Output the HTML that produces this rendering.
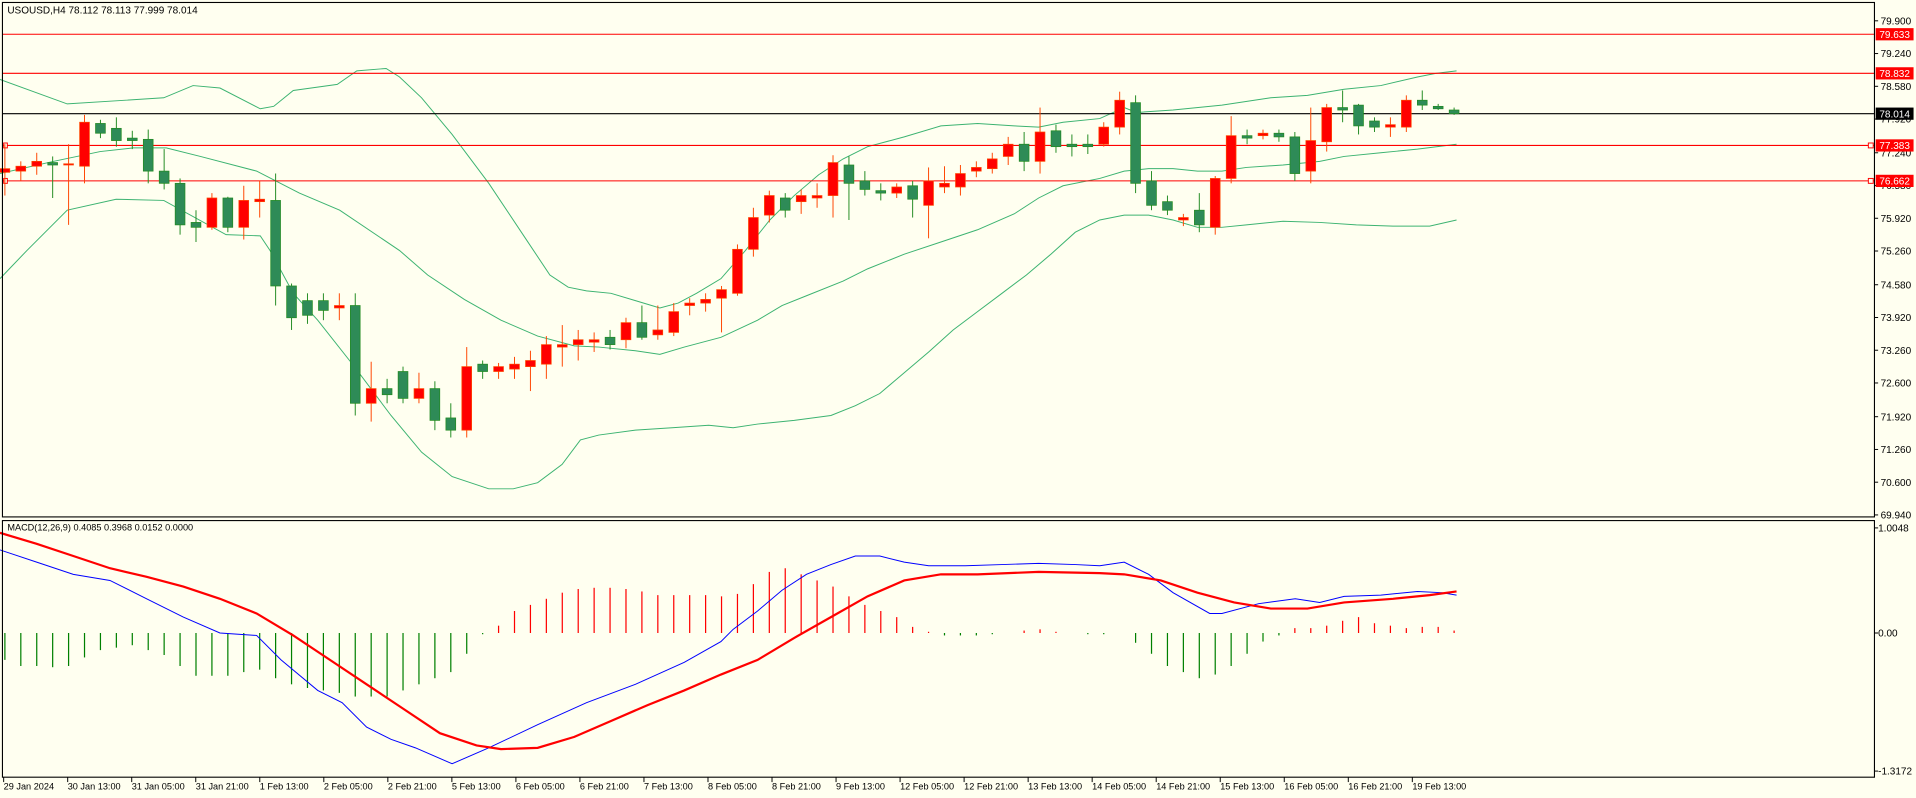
<!DOCTYPE html>
<html><head><meta charset="utf-8"><style>
html,body{margin:0;padding:0;background:#fffff0;overflow:hidden}
svg{display:block}
text{font-family:"Liberation Sans",sans-serif;font-size:8.2px;fill:#000}
</style></head><body>
<svg id="s" width="1916" height="798" viewBox="0 0 1568 653" xmlns="http://www.w3.org/2000/svg">
<rect x="0" y="0" width="1568" height="653" fill="#fffff0"/>
<g id="bands" fill="none" stroke="#3cb371" stroke-width="0.8"></g>
<g id="candles"></g>
<g id="macd"></g>
<g id="axes"></g>
</svg>
<script>
var NS="http://www.w3.org/2000/svg";
function el(p,t,a,txt){var e=document.createElementNS(NS,t);for(var k in a)e.setAttribute(k,a[k]);if(txt!==undefined)e.textContent=txt;p.appendChild(e);return e;}
var S=document.getElementById('s'),B=document.getElementById('bands'),C=document.getElementById('candles'),M=document.getElementById('macd'),A=document.getElementById('axes');
function pl(p,pts,st,w){el(p,'polyline',{points:pts.map(function(a){return a.join(',')}).join(' '),fill:'none',stroke:st,'stroke-width':w});}
var up=[[0,65],[55,85],[134,80],[158,70],[180,72],[213,89],[224,87],[240,74],[276,69],[292,58],[316,56],[327,63],[345,80],[370,110],[400,150],[430,195],[450,225],[465,235],[480,238],[500,240],[520,246],[540,252],[555,248],[570,240],[590,228],[610,205],[630,180],[650,160],[670,143],[690,130],[710,120],[740,112],[770,103],[800,101],[830,103],[850,104],[870,100],[900,97],[920,88],[930,92],[960,90],[1000,86],[1040,80],[1070,78],[1100,73],[1130,70],[1160,63],[1175,60],[1192,58]];
var mid=[[0,142],[44,132],[82,124],[109,121],[136,121],[164,128],[210,140],[245,158],[278,172],[327,205],[350,225],[380,245],[410,262],[440,275],[470,283],[490,284],[520,287],[540,290],[560,284],[590,276],[620,262],[640,250],[660,242],[690,230],[710,220],[740,208],[770,198],[800,188],[830,175],[850,162],[870,152],[900,146],[920,140],[940,138],[960,138],[980,140],[1000,140],[1020,137],[1050,135],[1080,132],[1100,128],[1130,125],[1160,122],[1192,118]];
var lo=[[0,228],[22,205],[55,172],[95,163],[134,164],[185,192],[213,193],[221,205],[240,240],[260,262],[290,300],[320,340],[345,370],[370,390],[400,400],[420,400],[440,395],[460,380],[475,360],[490,356],[520,352],[550,350],[580,348],[600,350],[620,347],[650,344],[680,340],[700,332],[720,322],[740,305],[760,288],[780,270],[800,255],[820,240],[840,225],[860,208],[880,190],[900,180],[920,176],[940,176],[960,180],[980,186],[1000,186],[1020,184],[1050,181],[1080,182],[1110,184],[1140,185],[1170,185],[1192,180]];
pl(B,up,'#3cb371',0.8);pl(B,mid,'#3cb371',0.8);pl(B,lo,'#3cb371',0.8);
[[28,'#ff0000'],[60,'#ff0000'],[119,'#ff0000'],[148,'#ff0000']].forEach(function(h){el(C,'line',{x1:2,x2:1534,y1:h[0],y2:h[0],stroke:h[1],'stroke-width':0.9});});
el(C,'line',{x1:2,x2:1534,y1:93,y2:93,stroke:'#000','stroke-width':0.9});
el(C,'rect',{x:1529,y:117,width:4,height:4,fill:'#fffff0',stroke:'#f00','stroke-width':0.8});
el(C,'rect',{x:1529,y:146,width:4,height:4,fill:'#fffff0',stroke:'#f00','stroke-width':0.8});
el(C,'rect',{x:3,y:117,width:3,height:4,fill:'#fffff0',stroke:'#f00','stroke-width':0.8});
el(C,'rect',{x:3,y:146,width:3,height:4,fill:'#fffff0',stroke:'#f00','stroke-width':0.8});
var cd=[['r',138,141,118,160],['r',136,140,132,148],['r',132,136,125,143],['g',133,135,128,162],['r',134,135,118,184],['r',100,136,94,150],['g',101,109,98,113],['g',105,115,96,120],['g',113,115,107,122],['g',114,140,106,150],['g',140,150,122,155],['g',150,184,146,192],['g',182,186,172,198],['r',162,186,158,188],['g',162,186,161,190],['r',164,186,152,196],['r',163,165,148,178],['g',164,234,142,250],['g',234,260,232,270],['g',246,258,240,265],['g',246,254,240,262],['r',250,252,240,262],['g',250,330,240,340],['r',318,330,296,345],['g',318,323,310,330],['g',304,326,300,330],['r',318,326,305,330],['g',318,344,312,352],['g',342,352,330,358],['r',300,352,284,358],['g',298,304,295,310],['r',300,304,297,310],['r',298,302,292,310],['r',295,300,287,320],['r',282,298,275,310],['r',282,284,266,300],['r',278,282,270,295],['r',278,280,272,288],['g',276,282,270,286],['r',264,278,260,285],['g',264,276,250,278],['r',270,274,250,278],['r',255,272,248,275],['r',248,250,244,258],['r',245,248,240,255],['r',237,244,234,272],['r',204,240,200,242],['r',178,204,170,210],['r',160,176,156,182],['g',162,172,158,178],['r',160,165,155,175],['r',160,162,150,170],['r',133,160,127,178],['g',135,150,128,180],['g',148,155,140,160],['g',156,158,150,164],['r',153,158,150,162],['g',152,163,148,178],['r',148,168,137,195],['r',150,153,136,158],['r',142,153,135,160],['r',137,140,132,145],['r',130,138,125,142],['r',118,128,112,135],['g',118,132,108,140],['r',108,132,88,142],['g',107,120,102,125],['g',118,120,110,128],['g',118,120,110,126],['r',104,118,100,120],['r',82,104,75,110],['g',84,150,78,158],['g',148,168,140,172],['g',165,172,160,176],['r',178,180,175,185],['g',172,184,158,190],['r',146,186,144,192],['r',111,146,95,150],['g',111,113,106,118],['r',109,111,106,114],['g',109,112,106,116],['g',112,142,108,148],['r',115,140,88,150],['r',88,116,85,124],['g',88,90,74,100],['g',86,103,85,110],['g',99,104,96,108],['r',102,104,96,112],['r',82,104,78,108],['g',82,86,74,90],['g',87,89,85,90],['g',90,93,88,94]];
var sp=(1190-4)/(cd.length-1);
cd.forEach(function(c,i){var x=4+i*sp;var r=c[0]=='r';var wc=r?'#ff4500':'#228b22';
el(C,'line',{x1:x,x2:x,y1:c[3],y2:c[4],stroke:wc,'stroke-width':0.8});
var h=Math.max(c[2]-c[1],1);
el(C,'rect',{x:x-4,y:c[1],width:8,height:h,fill:r?'#ff0000':'#2e8b57',stroke:wc,'stroke-width':0.6});});
var hv=[540,545,545,546,545,538,532,530,528,532,536,545,553,553,553,550,548,555,560,563,565,567,570,570,570,565,560,555,550,535,519,512,500,495,490,485,482,481,481,482,484,487,487,487,487,488,486,478,468,465,470,475,480,488,495,500,505,513,517,520,520,520,519,518,516,515,517,518,519,519,518,526,535,545,550,555,552,545,535,525,520,514,514,512,508,505,510,512,514,513,513,516];
for(var i=0;i<cd.length;i++){var x=4+i*sp;var v=hv[i];el(M,'line',{x1:x,x2:x,y1:518,y2:v,stroke:v>518?'#008000':'#ff0000','stroke-width':1});}
var bl=[[0,450],[30,460],[60,470],[90,475],[120,490],[150,505],[180,518],[210,520],[230,540],[260,565],[280,575],[300,595],[320,605],[340,612],[370,625],[400,612],[440,593],[480,575],[520,560],[560,542],[590,525],[600,515],[620,500],[640,483],[660,470],[680,462],[700,455],[720,455],[740,460],[760,463],[790,463],[820,462],[850,461],[880,462],[900,463],[920,460],[940,470],[960,485],[990,502],[1000,502],[1030,494],[1060,490],[1080,493],[1100,488],[1130,487],[1160,484],[1180,485],[1192,487]];
var rd=[[0,436],[30,445],[60,455],[90,465],[120,472],[150,480],[180,490],[210,502],[240,520],[270,540],[300,560],[330,580],[360,600],[390,610],[410,613],[440,612],[470,603],[500,590],[530,577],[560,565],[590,552],[620,540],[650,522],[680,505],[710,488],[740,475],[770,470],[800,470],[850,468],[900,469],[920,470],[950,475],[980,485],[1010,493],[1040,498],[1070,498],[1100,493],[1140,490],[1170,487],[1192,484]];
pl(M,bl,'#0000ff',0.8);pl(M,rd,'#ff0000',1.8);
el(A,'rect',{x:2,y:2,width:1532,height:421,fill:'none',stroke:'#000','stroke-width':0.9});
el(A,'rect',{x:2,y:426,width:1532,height:210,fill:'none',stroke:'#000','stroke-width':0.9});
el(A,'text',{x:6,y:11},'USOUSD,H4  78.112 78.113 77.999 78.014');
el(A,'text',{x:6,y:434,style:'font-size:7.5px'},'MACD(12,26,9) 0.4085 0.3968 0.0152 0.0000');
var pr=['79.900','79.240','78.580','77.920','77.240','76.580','75.920','75.260','74.580','73.920','73.260','72.600','71.920','71.260','70.600','69.940'];
pr.forEach(function(p){var y=17+(79.9-parseFloat(p))*40.6;el(A,'line',{x1:1534,x2:1537,y1:y,y2:y,stroke:'#000','stroke-width':0.8});el(A,'text',{x:1539,y:y+3},p);});
[[28,'79.633','#f00'],[60,'78.832','#f00'],[93,'78.014','#000'],[119,'77.383','#f00'],[148,'76.662','#f00']].forEach(function(l){el(A,'rect',{x:1535,y:l[0]-5,width:31,height:10,fill:l[2]});el(A,'text',{x:1538,y:l[0]+3,style:'fill:#fff'},l[1]);});
[[432,'1.0048'],[518,'0.00'],[631,'-1.3172']].forEach(function(l){el(A,'line',{x1:1534,x2:1537,y1:l[0],y2:l[0],stroke:'#000','stroke-width':0.8});el(A,'text',{x:1537,y:l[0]+3},l[1]);});
var dl=['29 Jan 2024','30 Jan 13:00','31 Jan 05:00','31 Jan 21:00','1 Feb 13:00','2 Feb 05:00','2 Feb 21:00','5 Feb 13:00','6 Feb 05:00','6 Feb 21:00','7 Feb 13:00','8 Feb 05:00','8 Feb 21:00','9 Feb 13:00','12 Feb 05:00','12 Feb 21:00','13 Feb 13:00','14 Feb 05:00','14 Feb 21:00','15 Feb 13:00','16 Feb 05:00','16 Feb 21:00','19 Feb 13:00'];
dl.forEach(function(d,i){var x=3+i*52.4;el(A,'line',{x1:x,x2:x,y1:636,y2:640,stroke:'#000','stroke-width':0.8});el(A,'text',{x:x,y:646,style:'font-size:7.5px'},d);});
</script>
</body></html>
